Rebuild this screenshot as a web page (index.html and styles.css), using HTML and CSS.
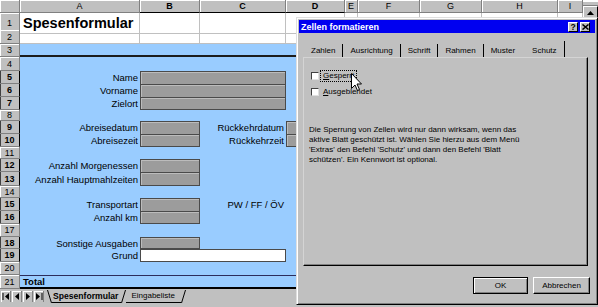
FILE: index.html
```html
<!DOCTYPE html>
<html lang="de">

<head>
  <meta charset="UTF-8">
  <title>Spesenformular</title>
  <link rel="stylesheet" href="styles.css">
</head>

<body>
  <div class="app">
    <div class="main">
      <div class="sheet">
        <div class="row colhead">
          <div class="corner"></div>
          <div class="ch">A</div>
          <div class="ch sel">B</div>
          <div class="ch sel">C</div>
          <div class="ch sel">D</div>
          <div class="ch">E</div>
          <div class="ch">F</div>
          <div class="ch">G</div>
          <div class="ch">H</div>
          <div class="ch">I</div>
        </div>
        <div class="row h17">
          <div class="rh">1</div>
          <div class="cell title">Spesenformular</div>
          <div class="cell"></div><div class="cell"></div><div class="cell"></div><div class="cell"></div>
          <div class="cell"></div><div class="cell"></div><div class="cell"></div><div class="cell"></div>
        </div>
        <div class="row h14">
          <div class="rh">2</div>
          <div class="cell"></div><div class="cell"></div><div class="cell"></div><div class="cell"></div>
          <div class="cell"></div><div class="cell"></div><div class="cell"></div><div class="cell"></div>
          <div class="cell"></div>
        </div>
        <div class="row blue h13">
          <div class="rh">3</div>
          <div class="band"></div>
        </div>
        <div class="row blue h14"><div class="rh">4</div></div>
        <div class="row blue h13">
          <div class="rh sel">5</div>
          <div class="lbl">Name</div>
          <div class="box wide"></div>
        </div>
        <div class="row blue h13">
          <div class="rh sel">6</div>
          <div class="lbl">Vorname</div>
          <div class="box wide"></div>
        </div>
        <div class="row blue h13">
          <div class="rh sel">7</div>
          <div class="lbl">Zielort</div>
          <div class="box wide last"></div>
        </div>
        <div class="row blue h11"><div class="rh">8</div></div>
        <div class="row blue h13">
          <div class="rh sel">9</div>
          <div class="lbl">Abreisedatum</div>
          <div class="box"></div>
          <div class="lbl">Rückkehrdatum</div>
          <div class="box"></div>
        </div>
        <div class="row blue h13">
          <div class="rh sel">10</div>
          <div class="lbl">Abreisezeit</div>
          <div class="box last"></div>
          <div class="lbl">Rückkehrzeit</div>
          <div class="box last"></div>
        </div>
        <div class="row blue h12"><div class="rh">11</div></div>
        <div class="row blue h13">
          <div class="rh sel">12</div>
          <div class="lbl">Anzahl Morgenessen</div>
          <div class="box"></div>
        </div>
        <div class="row blue h14">
          <div class="rh sel">13</div>
          <div class="lbl">Anzahl Hauptmahlzeiten</div>
          <div class="box last"></div>
        </div>
        <div class="row blue h12"><div class="rh">14</div></div>
        <div class="row blue h13">
          <div class="rh sel">15</div>
          <div class="lbl">Transportart</div>
          <div class="box"></div>
          <div class="lbl">PW / FF / ÖV</div>
        </div>
        <div class="row blue h13">
          <div class="rh sel">16</div>
          <div class="lbl">Anzahl km</div>
          <div class="box last"></div>
        </div>
        <div class="row blue h13"><div class="rh">17</div></div>
        <div class="row blue h12">
          <div class="rh sel">18</div>
          <div class="lbl">Sonstige Ausgaben</div>
          <div class="box last"></div>
        </div>
        <div class="row blue h13">
          <div class="rh sel">19</div>
          <div class="lbl">Grund</div>
          <div class="box wide last blank"></div>
        </div>
        <div class="row blue h13"><div class="rh">20</div></div>
        <div class="row blue h13">
          <div class="rh">21</div>
          <div class="total">Total</div>
        </div>
      </div>
      <div class="vscroll">
        <div class="split"></div>
        <div class="upbtn">
          <svg width="7" height="4" viewBox="0 0 7 4"><path d="M3.5 0 L7 4 H0 Z" fill="#000"/></svg>
        </div>
      </div>
    </div>

    <div class="tabbar">
      <div class="nav">
        <span class="navbtn"><svg width="8" height="7" viewBox="0 0 8 7"><path d="M1 0 V7" stroke="#000"/><path d="M7 0 L3 3.5 L7 7 Z" fill="#000"/></svg></span>
        <span class="navbtn"><svg width="8" height="7" viewBox="0 0 8 7"><path d="M6 0 L2 3.5 L6 7 Z" fill="#000"/></svg></span>
        <span class="navbtn"><svg width="8" height="7" viewBox="0 0 8 7"><path d="M2 0 L6 3.5 L2 7 Z" fill="#000"/></svg></span>
        <span class="navbtn"><svg width="8" height="7" viewBox="0 0 8 7"><path d="M1 0 L5 3.5 L1 7 Z" fill="#000"/><path d="M7 0 V7" stroke="#000"/></svg></span>
      </div>
      <div class="tabs">
        <svg class="slant" width="5" height="13" viewBox="0 0 5 13"><path d="M0.5 0 L4.5 13" stroke="#000"/></svg>
        <span class="tab active">Spesenformular</span>
        <svg class="slant" width="5" height="13" viewBox="0 0 5 13"><path d="M0.5 13 L4.5 0" stroke="#000"/></svg>
        <span class="tab">Eingabeliste</span>
        <svg class="slant" width="5" height="13" viewBox="0 0 5 13"><path d="M0.5 13 L4.5 0" stroke="#000"/></svg>
      </div>
    </div>
  </div>

  <div class="dialog">
    <div class="titlebar">
      <span class="dtitle">Zellen formatieren</span>
      <span class="tbtn help">?</span>
      <span class="tbtn">
        <svg width="7" height="6" viewBox="0 0 7 6"><path d="M0.5 0.5 L6.5 5.5 M6.5 0.5 L0.5 5.5" stroke="#000" stroke-width="1.5"/></svg>
      </span>
    </div>
    <div class="tabstrip">
      <span class="dtab">Zahlen</span>
      <span class="dtab">Ausrichtung</span>
      <span class="dtab">Schrift</span>
      <span class="dtab">Rahmen</span>
      <span class="dtab plain">Muster</span>
      <span class="dtab active">Schutz</span>
    </div>
    <div class="panel">
      <div class="check">
        <span class="cb"></span><span class="ctext focus"><u>G</u>esperrt</span>
      </div>
      <div class="check second">
        <span class="cb"></span><span class="ctext"><u>A</u>usgeblendet</span>
      </div>
      <p class="note">
        Die Sperrung von Zellen wird nur dann wirksam, wenn das<br>
        aktive Blatt geschützt ist. Wählen Sie hierzu aus dem Menü<br>
        'Extras' den Befehl 'Schutz' und dann den Befehl 'Blatt<br>
        schützen'. Ein Kennwort ist optional.
      </p>
    </div>
    <div class="buttons">
      <span class="btn default">OK</span>
      <span class="btn">Abbrechen</span>
    </div>
  </div>

  <svg class="cursor" width="12" height="19" viewBox="0 0 12 19">
    <path d="M0.5 0.5 V15.5 L4 12 L6.5 17.5 L8.5 16.5 L6 11 H10.5 Z" fill="#fff" stroke="#000"/>
  </svg>
</body>

</html>
```

FILE: styles.css
```css
* {
  margin: 0;
  padding: 0;
  box-sizing: border-box;
}

body {
  width: 598px;
  height: 307px;
  overflow: hidden;
  position: relative;
  background-color: #c0c0c0;
  font-family: "Liberation Sans", Arial, sans-serif;
  color: #000;
}

.app {
  display: flex;
  flex-direction: column;
  height: 307px;
}

.main {
  display: flex;
  height: 288px;
}

.sheet {
  width: 583px;
  background-color: #fff;
}

.row {
  display: grid;
  grid-template-columns: 20px 120px 60px 86px 59px 13px 62px 62px 76px 25px;
  height: 13px;
}

.h11 { height: 11px; }
.h12 { height: 12px; }
.h13 { height: 13px; }
.h14 { height: 14px; }
.h17 { height: 17px; }

.blue {
  background-color: #99ccff;
}

/* headers */
.corner,
.ch,
.rh {
  background-color: #c0c0c0;
  border-right: 1px solid #808080;
  border-bottom: 1px solid #808080;
  box-shadow: inset 1px 1px #fff;
  font-size: 9px;
  display: flex;
  align-items: center;
  justify-content: center;
}

.ch.sel,
.rh.sel {
  font-weight: bold;
}

.rh.sel {
  border-right-color: #000;
  box-shadow: inset 1px 0 #404040;
}

.ch.sel {
  border-bottom-color: #000;
}

/* cells */
.cell {
  border-right: 1px solid #c0c0c0;
  border-bottom: 1px solid #c0c0c0;
}

.title {
  font-size: 14.5px;
  font-weight: bold;
  line-height: 20px;
  padding-left: 3px;
  white-space: nowrap;
}

.band {
  grid-column: 2 / -1;
  border-bottom: 2px solid #1c1c1c;
}

.lbl {
  font-size: 9.5px;
  white-space: nowrap;
  display: flex;
  align-items: center;
  justify-content: flex-end;
  padding-right: 2px;
}

.box {
  background-color: #9c9c9c;
  border: 1px solid #4a4a4a;
  border-bottom: 0;
  box-shadow: inset 1px 1px #bcbcbc;
}

.box.last {
  border-bottom: 1px solid #4a4a4a;
}

.box.wide {
  grid-column: span 2;
}

.box.blank {
  background-color: #fff;
  box-shadow: none;
}

.total {
  grid-column: 2 / -1;
  border-top: 1px solid #2c2c5c;
  border-bottom: 2px solid #000;
  font-size: 9.5px;
  font-weight: bold;
  padding-left: 3px;
  display: flex;
  align-items: center;
}

/* vertical scrollbar */
.vscroll {
  width: 15px;
  background-color: #dcdcdc;
}

.split {
  height: 6px;
  background-color: #c0c0c0;
  border-bottom: 1px solid #808080;
  box-shadow: inset 0 2px #fff;
}

.upbtn {
  height: 13px;
  background-color: #c0c0c0;
  border: 1px solid;
  border-color: #fff #000 #000 #fff;
  display: flex;
  align-items: center;
  justify-content: center;
}

/* sheet tabs */
.tabbar {
  height: 19px;
  display: flex;
  align-items: center;
  padding: 0 0 3px 1px;
}

.nav {
  display: flex;
  gap: 1px;
}

.navbtn {
  width: 10px;
  height: 11px;
  background-color: #c0c0c0;
  border-right: 1px solid #808080;
  box-shadow: inset 1px 1px #fff;
  display: flex;
  align-items: center;
  justify-content: center;
}

.tabs {
  display: flex;
  align-items: stretch;
  height: 13px;
  margin-left: 3px;
}

.slant {
  display: block;
}

.tab {
  font-size: 8px;
  line-height: 12px;
  border-bottom: 1px solid #000;
  padding: 0 6px 0 5px;
}

.tab.active {
  font-size: 8.6px;
  font-weight: bold;
  padding: 0 3px 0 1px;
}

/* dialog */
.dialog {
  position: absolute;
  left: 296px;
  top: 17px;
  width: 302px;
  height: 288px;
  padding: 2px;
  background-color: #c0c0c0;
  border: 1px solid;
  border-color: #dfdfdf #000 #000 #dfdfdf;
  box-shadow: inset 1px 1px #fff, inset -1px -1px #808080;
  display: flex;
  flex-direction: column;
  font-size: 8px;
}

.titlebar {
  height: 13px;
  background-color: #0000f0;
  color: #fff;
  display: flex;
  align-items: center;
  gap: 2px;
  padding: 0 5px 0 2px;
}

.dtitle {
  font-size: 9px;
  font-weight: bold;
  margin-right: auto;
}

.tbtn {
  width: 10px;
  height: 10px;
  background-color: #c0c0c0;
  border: 1px solid;
  border-color: #fff #000 #000 #fff;
  color: #000;
  font-size: 8.5px;
  font-weight: bold;
  line-height: 8px;
  text-align: center;
  display: flex;
  align-items: center;
  justify-content: center;
}

.tabstrip {
  display: flex;
  align-items: flex-end;
  height: 17px;
  margin: 7px 0 0 5px;
}

.dtab {
  height: 13px;
  line-height: 13px;
  padding: 0 7px;
  border-right: 1px solid #000;
}

.dtab.plain {
  border-right: 0;
}

.dtab.active {
  height: 16px;
  padding: 3px 7px 0 10px;
}

.panel {
  height: 209px;
  margin: 0 7px 0 4px;
  padding-top: 13px;
  border: 1px solid;
  border-color: #d4d4d4 #000 #000 #d4d4d4;
  box-shadow: inset -1px -1px #808080;
}

.check {
  display: flex;
  align-items: center;
  height: 10px;
  padding-left: 7px;
}

.check.second {
  margin-top: 6px;
}

.cb {
  width: 8px;
  height: 8px;
  background-color: #fff;
  border: 1px solid;
  border-color: #404040 #e0e0e0 #e0e0e0 #404040;
}

.ctext {
  margin-left: 2px;
  padding: 0 2px;
  line-height: 10px;
}

.ctext.focus {
  outline: 1px dotted #000;
}

.note {
  margin: 28px 0 0 5px;
  line-height: 10px;
}

.buttons {
  display: flex;
  justify-content: flex-end;
  gap: 5px;
  margin: 11px 5px 0 0;
}

.btn {
  width: 57px;
  height: 17px;
  line-height: 15px;
  text-align: center;
  border: 1px solid;
  border-color: #fff #000 #000 #fff;
  box-shadow: inset -1px -1px #808080;
}

.btn.default {
  width: 55px;
  border-color: #000;
  box-shadow: inset 1px 1px #fff, inset -1px -1px #808080;
}

.cursor {
  position: absolute;
  left: 351px;
  top: 73px;
}
```
